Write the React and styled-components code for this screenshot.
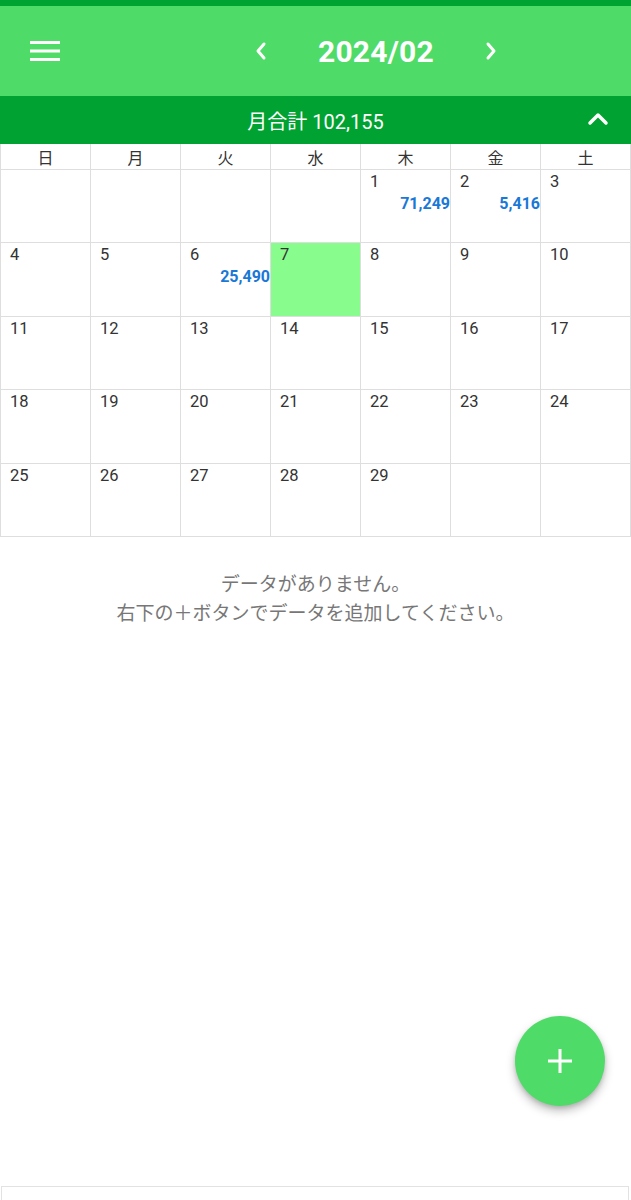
import React from "react";
import styled, { createGlobalStyle } from "styled-components";

const Global = createGlobalStyle`
  html, body { margin: 0; padding: 0; background: #fff; }
  body { font-family: Roboto, "Noto Sans CJK JP", sans-serif; }
  * { box-sizing: border-box; }
`;

const Page = styled.div`
  height: 1200px;
  display: flex;
  flex-direction: column;
  overflow: hidden;
`;

const StatusBar = styled.div`
  height: 6px;
  background: #00a331;
`;

const AppBar = styled.header`
  height: 90px;
  background: #4fdb68;
  display: flex;
  align-items: center;
  color: #fff;
  padding-left: 30px;
`;

const IconButton = styled.button`
  border: 0;
  background: transparent;
  padding: 0;
  color: #fff;
  display: flex;
  align-items: center;
  justify-content: center;
  cursor: pointer;
`;

const MenuButton = styled(IconButton)`
  width: 30px;
`;

const MonthNav = styled.div`
  display: flex;
  align-items: center;
  gap: 50px;
  margin-left: 194px;
`;

const MonthTitle = styled.div`
  font-size: 30px;
  font-weight: 700;
  letter-spacing: 0.2px;
`;

const TotalBar = styled.div`
  height: 48px;
  background: #00a331;
  color: #fff;
  display: flex;
  align-items: center;
  justify-content: center;
  position: relative;
  font-size: 20px;
`;

const CollapseButton = styled(IconButton)`
  position: absolute;
  right: 22px;
  top: 14px;
`;

const Grid = styled.div`
  display: grid;
  grid-template-columns: repeat(7, 1fr);
  border-left: 1px solid #dedede;
`;

const WeekHead = styled.div`
  height: 26px;
  display: flex;
  align-items: center;
  justify-content: center;
  font-size: 16px;
  color: #333;
  border-right: 1px solid #dedede;
  border-bottom: 1px solid #dedede;
`;

const Cell = styled.div`
  height: 73.4px;
  border-right: 1px solid #dedede;
  border-bottom: 1px solid #dedede;
  background: ${(p) => (p.$today ? "#88fc8c" : "#fff")};
  display: flex;
  flex-direction: column;
  padding: 2px 0 0 9px;
`;

const DayNum = styled.div`
  font-size: 16.5px;
  color: #333;
  line-height: 20px;
`;

const Amount = styled.div`
  font-size: 16px;
  font-weight: 700;
  color: #1a78d6;
  text-align: right;
  line-height: 20px;
  margin-top: 2px;
`;

const Empty = styled.div`
  flex: 1;
  padding-top: 33px;
  text-align: center;
  color: #777;
  font-size: 19px;
  line-height: 29px;
`;

const BottomBox = styled.div`
  height: 14px;
  margin: 0 2px 0 1px;
  border: 1px solid #e2e2e2;
  border-bottom: 0;
`;

const Fab = styled.button`
  position: fixed;
  left: 515px;
  top: 1016px;
  width: 90px;
  height: 90px;
  border-radius: 50%;
  border: 0;
  background: #4fdb68;
  box-shadow: 0 5px 10px rgba(0, 0, 0, 0.25), 0 2px 4px rgba(0, 0, 0, 0.12);
  display: flex;
  align-items: center;
  justify-content: center;
  padding: 0;
`;

const weekdays = ["日", "月", "火", "水", "木", "金", "土"];
const amounts = { 1: "71,249", 2: "5,416", 6: "25,490" };

function buildCells() {
  const cells = [];
  for (let i = 0; i < 4; i++) cells.push(null);
  for (let d = 1; d <= 29; d++) cells.push(d);
  while (cells.length < 35) cells.push(null);
  return cells;
}

export default function App() {
  const cells = buildCells();
  return (
    <Page>
      <Global />
      <StatusBar />
      <AppBar>
        <MenuButton aria-label="menu">
          <svg width="30" height="22" viewBox="0 0 30 22">
            <rect x="0" y="1" width="30" height="3" fill="#fff" />
            <rect x="0" y="9.5" width="30" height="3" fill="#fff" />
            <rect x="0" y="18" width="30" height="3" fill="#fff" />
          </svg>
        </MenuButton>
        <MonthNav>
          <IconButton aria-label="prev">
            <svg width="14" height="20" viewBox="0 0 14 20">
              <path d="M10 3 L4 10 L10 17" fill="none" stroke="#fff" strokeWidth="3" strokeLinecap="round" strokeLinejoin="round" />
            </svg>
          </IconButton>
          <MonthTitle>2024/02</MonthTitle>
          <IconButton aria-label="next">
            <svg width="14" height="20" viewBox="0 0 14 20">
              <path d="M4 3 L10 10 L4 17" fill="none" stroke="#fff" strokeWidth="3" strokeLinecap="round" strokeLinejoin="round" />
            </svg>
          </IconButton>
        </MonthNav>
      </AppBar>
      <TotalBar>
        月合計 102,155
        <CollapseButton aria-label="collapse">
          <svg width="22" height="18" viewBox="0 0 22 18">
            <path d="M3 13 L11 5 L19 13" fill="none" stroke="#fff" strokeWidth="3.5" strokeLinecap="round" strokeLinejoin="round" />
          </svg>
        </CollapseButton>
      </TotalBar>
      <Grid>
        {weekdays.map((w) => (
          <WeekHead key={w}>{w}</WeekHead>
        ))}
        {cells.map((d, i) => (
          <Cell key={i} $today={d === 7}>
            {d && <DayNum>{d}</DayNum>}
            {d && amounts[d] && <Amount>{amounts[d]}</Amount>}
          </Cell>
        ))}
      </Grid>
      <Empty>
        データがありません。
        <br />
        右下の＋ボタンでデータを追加してください。
      </Empty>
      <BottomBox />
      <Fab aria-label="add">
        <svg width="26" height="26" viewBox="0 0 26 26">
          <path d="M13 1 V25 M1 13 H25" stroke="#fff" strokeWidth="3" />
        </svg>
      </Fab>
    </Page>
  );
}
